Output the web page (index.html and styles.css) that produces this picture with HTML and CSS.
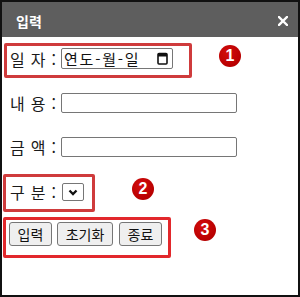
FILE: index.html
```html
<!DOCTYPE html>
<html lang="ko">
<head>
<meta charset="utf-8">
<title>입력</title>
<link rel="stylesheet" href="styles.css">
</head>
<body>
<div class="window">
  <header class="titlebar">
    <span class="title">입력</span>
    <svg class="close" width="10" height="10" viewBox="0 0 10 10" aria-label="닫기">
      <path d="M1 1 L9 9 M9 1 L1 9" stroke="#fff" stroke-width="2.4" stroke-linecap="square" fill="none"/>
    </svg>
  </header>
  <main class="content">
    <div class="row row-date">
      <div class="mark mark-1">
        <span class="label">일 자 :</span>
        <div class="date-input">
          <span class="date-text">연도-월-일</span>
          <svg class="cal" width="11" height="13" viewBox="0 0 11 13">
            <rect x="1" y="1.5" width="9" height="10.5" rx="1" fill="none" stroke="#111" stroke-width="1.6"/>
            <rect x="1" y="1.5" width="9" height="3" fill="#111"/>
          </svg>
        </div>
      </div>
      <span class="badge badge-1">1</span>
    </div>
    <div class="row row-plain row-content">
      <span class="label">내 용 :</span>
      <input class="text-input" type="text">
    </div>
    <div class="row row-plain row-amount">
      <span class="label">금 액 :</span>
      <input class="text-input" type="text">
    </div>
    <div class="row row-kind">
      <div class="mark mark-2">
        <span class="label label-wide">구 분 :</span>
        <div class="select">
          <svg width="10" height="7" viewBox="0 0 10 7">
            <path d="M1.5 1.5 L5 5 L8.5 1.5" stroke="#111" stroke-width="2.3" fill="none"/>
          </svg>
        </div>
      </div>
      <span class="badge badge-2">2</span>
    </div>
    <div class="row row-buttons">
      <div class="mark mark-3">
        <button class="btn btn-short" type="button">입력</button>
        <button class="btn btn-long" type="button">초기화</button>
        <button class="btn btn-short" type="button">종료</button>
      </div>
      <span class="badge badge-3">3</span>
    </div>
  </main>
</div>
</body>
</html>
```

FILE: styles.css
```css
html, body {
  margin: 0;
  padding: 0;
  background: #fff;
}

body {
  font-family: "Noto Sans CJK KR", "Noto Sans", sans-serif;
  color: #111;
}

.window {
  width: 300px;
  height: 297px;
  box-sizing: border-box;
  border: 2px solid #111;
  display: flex;
  flex-direction: column;
  overflow: hidden;
}

.titlebar {
  height: 35px;
  flex-shrink: 0;
  background: #5e5e5e;
  display: flex;
  align-items: center;
  justify-content: space-between;
  padding: 3px 10px 0 14px;
  box-sizing: border-box;
}

.title {
  color: #fff;
  font-weight: 700;
  font-size: 14px;
  line-height: 1;
}

.close {
  display: block;
}

.content {
  display: flex;
  flex-direction: column;
  padding: 0 0 0 2px;
}

.row {
  display: flex;
  align-items: flex-start;
}

.mark {
  display: flex;
  align-items: center;
  border: 3px solid #cf3b3c;
  border-radius: 2px;
  box-sizing: border-box;
}

.label {
  width: 51px;
  flex-shrink: 0;
  font-size: 16px;
  line-height: 20px;
  white-space: pre;
  word-spacing: 1.5px;
  color: #1a1a1a;
}

.label-wide {
  width: 52px;
}

/* row 1 : date */
.row-date {
  margin-top: 6px;
}

.mark-1 {
  height: 35px;
  padding: 2px 16px 6px 3px;
}

.date-input {
  width: 112px;
  height: 21px;
  box-sizing: border-box;
  border: 1px solid #767676;
  border-radius: 2px;
  display: flex;
  align-items: center;
  justify-content: space-between;
  padding: 0 4px 0 2px;
}

.date-text {
  font-size: 15px;
  line-height: 1;
  letter-spacing: 1.8px;
}

.cal {
  display: block;
}

/* plain rows */
.row-plain {
  padding-left: 6px;
  align-items: center;
}

.row-content {
  margin-top: 15px;
}

.row-amount {
  margin-top: 24px;
}

.text-input {
  width: 176px;
  height: 20px;
  box-sizing: border-box;
  border: 1px solid #767676;
  border-radius: 2px;
  margin: 0;
  padding: 0 3px;
  background: #fff;
}

/* row 4 : select */
.row-kind {
  margin-top: 17px;
  margin-left: -1px;
}

.mark-2 {
  height: 38px;
  padding: 6px 8px 8px 4px;
}

.select {
  width: 22px;
  height: 18px;
  box-sizing: border-box;
  border: 1px solid #767676;
  border-radius: 2px;
  display: flex;
  align-items: center;
  justify-content: center;
}

.select svg {
  display: block;
}

/* row 5 : buttons */
.row-buttons {
  margin-top: 5px;
  margin-left: -1px;
}

.mark-3 {
  height: 41px;
  padding: 2px 6px 9px 3px;
  gap: 5px;
  border-color: #e2282c;
  align-items: flex-start;
}

.btn {
  height: 24px;
  box-sizing: border-box;
  margin: 0;
  padding: 0;
  background: #efefef;
  border: 1px solid #767676;
  border-radius: 3px;
  font-family: "Noto Sans CJK KR", "Noto Sans", sans-serif;
  font-size: 14px;
  line-height: 1;
  color: #111;
}

.btn-short {
  width: 43px;
}

.btn-long {
  width: 56px;
  margin-right: 1px;
}

/* annotation badges */
.badge {
  width: 22px;
  height: 22px;
  border-radius: 50%;
  background: radial-gradient(circle at 40% 35%, #d40d0d 0%, #b80000 70%, #9c0000 100%);
  color: #fff;
  font-family: "Liberation Sans", Arial, sans-serif;
  font-weight: 700;
  font-size: 16px;
  line-height: 22px;
  text-align: center;
  flex-shrink: 0;
}

.badge-1 {
  margin-left: 27px;
  margin-top: 2px;
}

.badge-2 {
  margin-left: 37px;
  margin-top: 4px;
}

.badge-3 {
  margin-left: 23px;
  margin-top: 2px;
}
```
